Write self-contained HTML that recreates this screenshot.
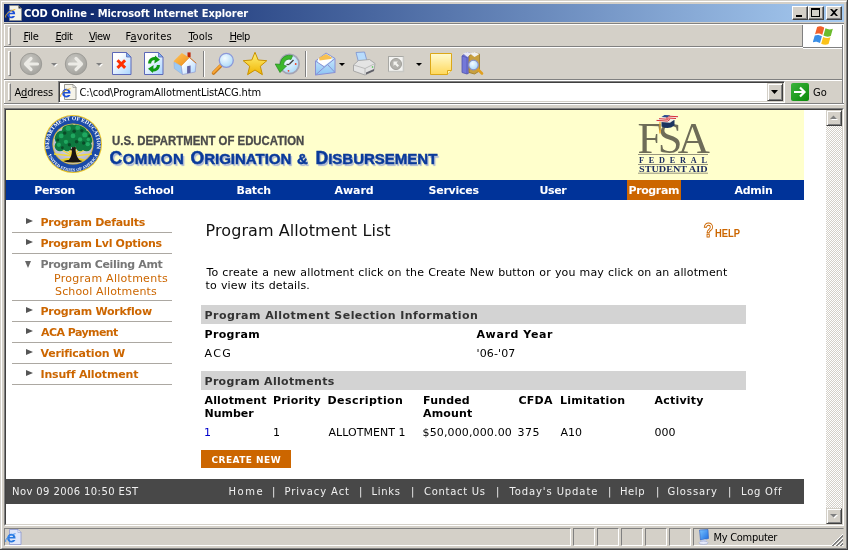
<!DOCTYPE html>
<html><head><meta charset="utf-8"><title>COD Online</title>
<style>
*{box-sizing:border-box;margin:0;padding:0}
html,body{width:848px;height:550px;overflow:hidden;background:#d4d0c8}
body{position:relative;font-family:"DejaVu Sans","Liberation Sans",sans-serif;font-size:11px;color:#000}
.a{position:absolute}
.ui{font-family:"DejaVu Sans Condensed","DejaVu Sans","Liberation Sans",sans-serif;font-size:11px;white-space:nowrap;line-height:14px}
u{text-decoration:underline}
/* frame */
#f1{left:0;top:0;width:848px;height:550px;border-right:1px solid #404040;border-bottom:1px solid #404040}
#f2{left:1px;top:1px;width:846px;height:548px;border:1px solid #fff;border-right-color:#808080;border-bottom-color:#808080}
#title{left:4px;top:4px;width:840px;height:18px;background:linear-gradient(90deg,#0a246a 0%,#0a246a 6%,#a6caf0 100%)}
#title .t{color:#fff;font-weight:bold;font-size:11px;line-height:14px}
.cb{top:2px;width:16px;height:14px;background:#d4d0c8;border:1px solid #fff;border-right-color:#404040;border-bottom-color:#404040;box-shadow:inset -1px -1px 0 #808080}
.hl{height:2px;border-top:1px solid #808080;border-bottom:1px solid #fff;left:4px;width:840px}
.grip{width:3px;border-left:1px solid #fff;border-top:1px solid #fff;border-right:1px solid #808080;border-bottom:1px solid #808080;background:#d4d0c8}
.menu span{position:absolute;top:0}
.sep{width:2px;border-left:1px solid #808080;border-right:1px solid #fff}

.t{position:absolute;white-space:nowrap;line-height:13px;font-size:11px}
.b{font-weight:bold}
.o{color:#cc6600}
.nav{position:absolute;top:184px;width:100px;text-align:center;color:#fff;font-weight:bold;font-size:11px;line-height:13px}
.sl{position:absolute;left:12px;width:160px;height:1px;background:#aca8a2}
.tri{position:absolute;left:26px;width:0;height:0;border:3.500px solid transparent;border-left:7px solid #555;border-right:0}
.bar{position:absolute;left:201px;width:545px;height:19px;background:#d3d3d3}
.f{color:#f0f0f0;font-size:10px}
.sc{font-size:15px}

.sp{position:absolute;top:528px;height:18px;border:1px solid #808080;border-right-color:#fff;border-bottom-color:#fff}
.chk{background-color:#fff;background-image:linear-gradient(45deg,#d4d0c8 25%,transparent 25%,transparent 75%,#d4d0c8 75%),linear-gradient(45deg,#d4d0c8 25%,transparent 25%,transparent 75%,#d4d0c8 75%);background-size:2px 2px;background-position:0 0,1px 1px}
.sbtn{position:absolute;left:826px;width:16px;height:16px;background:#d4d0c8;border:1px solid #d4d0c8;border-right-color:#404040;border-bottom-color:#404040;box-shadow:inset 1px 1px 0 #fff,inset -1px -1px 0 #808080}
</style></head><body><div id="root" style="position:absolute;left:0;top:0;width:848px;height:550px;will-change:transform">
<div class="a" id="f1"></div><div class="a" id="f2"></div>
<!-- title bar -->
<div class="a" id="title">
<svg class="a" style="left:1px;top:1px" width="17" height="16" viewBox="0 0 17 16"><path d="M4.5 .5h9l3 3v12h-12z" fill="#f4f2e8" stroke="#8a8a80" stroke-width=".6"/><path d="M13.5 .5v3h3z" fill="#333"/><path d="M3 9.2h7.2c0-3-2-4.400-4-4.400c-2.400 0-4.200 1.800-4.200 4.300c0 2.500 1.800 4.200 4.200 4.200c1.800 0 3.200-.9 3.800-2.400h-2.400c-.3.500-.8.700-1.400.700c-1.100 0-1.800-.8-1.900-1.700zM4.300 7.800c.2-.9.900-1.400 1.800-1.400c.9 0 1.600.5 1.700 1.400z" fill="#1c4fd8"/><path d="M.8 12.500c-1-2 2-6.500 9.500-8" fill="none" stroke="#e8b020" stroke-width="1"/></svg>
<div class="a ui t" id="ttl" style="left:20px;top:3px;letter-spacing:-.05px">COD Online - Microsoft Internet Explorer</div>
<div class="a cb" style="left:788px"><div class="a" style="left:3px;top:8px;width:6px;height:2px;background:#000"></div></div>
<div class="a cb" style="left:804px"><div class="a" style="left:2px;top:1px;width:9px;height:9px;border:1px solid #000;border-top-width:2px"></div></div>
<div class="a cb" style="left:822px"><svg class="a" style="left:3px;top:2px" width="8" height="7" viewBox="0 0 8 7"><path d="M0 0h2l2 2 2-2h2l-3 3.500 3 3.500h-2l-2-2-2 2h-2l3-3.500z" fill="#000"/></svg></div>
</div>
<!-- rebar -->
<div class="a hl" style="top:23px"></div>
<div class="a" style="left:4px;top:24px;width:1px;height:79px;background:#fff"></div>
<div class="a grip" style="left:8px;top:27px;height:18px"></div>
<div class="a ui" id="m0" style="left:23.4px;top:30px;letter-spacing:-0.36px"><u>F</u>ile</div><div class="a ui" id="m1" style="left:55.4px;top:30px;letter-spacing:-0.54px"><u>E</u>dit</div><div class="a ui" id="m2" style="left:88.9px;top:30px;letter-spacing:-0.6px"><u>V</u>iew</div><div class="a ui" id="m3" style="left:125.56px;top:30px;letter-spacing:0.18px">F<u>a</u>vorites</div><div class="a ui" id="m4" style="left:188.4px;top:30px;letter-spacing:0px"><u>T</u>ools</div><div class="a ui" id="m5" style="left:229.4px;top:30px;letter-spacing:-0.54px"><u>H</u>elp</div>
<div class="a" style="left:802px;top:25px;width:41px;height:23px;background:#fff;border-left:1px solid #808080;border-right:1px solid #808080"></div>
<svg class="a" style="left:812.500px;top:26px" width="22" height="19" viewBox="0 0 21.500 18.600"><path d="M4 1c2.500-1.200 5-.6 7 .8l-2 7c-2-1.400-4.500-1.800-7-.8z" fill="#f2602a"/><path d="M12.200 2.300c2.200 1.300 4.800 1.600 7.200.4l-2 7c-2.400 1.200-5 .9-7.200-.4z" fill="#6cbb2d"/><path d="M1.700 9.300c2.500-1.100 5-.6 7 .8l-1.900 6.600c-2-1.400-4.500-1.900-7-.8z" fill="#3a8ee6"/><path d="M9.900 10.700c2.200 1.300 4.800 1.600 7.200.4l-1.900 6.600c-2.400 1.200-5 .9-7.200-.4z" fill="#fbc21a"/></svg>
<div class="a hl" style="top:46px"></div><div class="a" style="left:803px;top:46px;width:39px;height:3px;background:#fff;border-top:1px solid #fff;border-bottom:1px solid #fff"><div style="height:1px;background:#808080"></div></div>
<div class="a grip" style="left:8px;top:51px;height:25px"></div>
<svg class="a" style="left:0;top:48px" width="500" height="31" viewBox="0 48 500 31">
<defs>
<radialGradient id="gb" cx=".4" cy=".35" r=".7"><stop offset="0" stop-color="#c9c8c3"/><stop offset="1" stop-color="#a3a29d"/></radialGradient>
<linearGradient id="gp" x1="0" y1="0" x2="1" y2="1"><stop offset=".25" stop-color="#fff"/><stop offset="1" stop-color="#a8d4ff"/></linearGradient>
<linearGradient id="gn" x1="0" y1="0" x2="0" y2="1"><stop offset="0" stop-color="#fffbd0"/><stop offset="1" stop-color="#ffd85a"/></linearGradient>
<linearGradient id="gs" x1="0" y1="0" x2="0" y2="1"><stop offset="0" stop-color="#fff27a"/><stop offset="1" stop-color="#f0b400"/></linearGradient>
<linearGradient id="gr" x1="0" y1="0" x2="1" y2="1"><stop offset="0" stop-color="#ffc860"/><stop offset="1" stop-color="#f08a10"/></linearGradient>
<linearGradient id="gm" x1="0" y1="0" x2="0" y2="1"><stop offset="0" stop-color="#d8f0ff"/><stop offset="1" stop-color="#8cc4f4"/></linearGradient>
<radialGradient id="gl" cx=".4" cy=".35" r=".7"><stop offset="0" stop-color="#f4fbff"/><stop offset="1" stop-color="#a8d8f8"/></radialGradient>
</defs>
<!-- back / forward -->
<circle cx="31" cy="64" r="10.700" fill="url(#gb)" stroke="#9c9b96" stroke-width="1"/>
<path d="M37.500 64h-11M31 58.500l-5.500 5.500 5.500 5.500" fill="none" stroke="#ecebe6" stroke-width="3.200" stroke-linecap="round" stroke-linejoin="round"/>
<path d="M52 64h6l-3 3z" fill="#fff"/><path d="M51 63h6l-3 3z" fill="#808080"/>
<circle cx="76" cy="64" r="10.700" fill="url(#gb)" stroke="#9c9b96" stroke-width="1"/>
<path d="M69.500 64h11M76 58.500l5.500 5.500-5.500 5.500" fill="none" stroke="#ecebe6" stroke-width="3.200" stroke-linecap="round" stroke-linejoin="round"/>
<path d="M97 64h6l-3 3z" fill="#fff"/><path d="M96 63h6l-3 3z" fill="#808080"/>
<!-- stop -->
<path d="M112.500 52.500h14l4.500 4.500v17.500h-18.500z" fill="url(#gp)" stroke="#5c68b8" stroke-width="1"/>
<path d="M126.500 52.500v4.500h4.500z" fill="#7ab0f0" stroke="#5c68b8" stroke-width=".8"/>
<path d="M117.500 60.300l7.600 7.600M125.100 60.300l-7.600 7.600" stroke="#ff3000" stroke-width="3" fill="none"/>
<!-- refresh -->
<path d="M144.500 52.500h14l4.500 4.500v17.500h-18.500z" fill="url(#gp)" stroke="#5c68b8" stroke-width="1"/>
<path d="M158.500 52.500v4.500h4.500z" fill="#7ab0f0" stroke="#5c68b8" stroke-width=".8"/>
<path d="M149.600 63.500c0-4 3.600-6 7-4.600" fill="none" stroke="#0f9a12" stroke-width="3"/><path d="M155 55.600l5 4.200-5.600 3.600z" fill="#0f9a12"/>
<path d="M158.400 65c0 4-3.600 6-7 4.600" fill="none" stroke="#0f9a12" stroke-width="3"/><path d="M153 72.900l-5-4.200 5.600-3.600z" fill="#0f9a12"/>
<!-- home -->
<path d="M187.500 52.400h3.100v5h-3.100z" fill="#c02808"/>
<path d="M174 62.200l7.200 3.500 1.300 8.800-8.100-6z" fill="#9ccaf4" stroke="#88a8dc" stroke-width=".5"/>
<path d="M189.200 57.500l6.800 5.700-.8 8.800-12.700 2.500-1.300-8.800z" fill="url(#gp)" stroke="#8890cc" stroke-width=".6"/>
<path d="M187.100 66.200l3.500-.7v7.300l-3.500.7z" fill="#6464a4"/>
<path d="M173.500 61.300l8.300-8.200 7.600 4.600-8 8.400z" fill="url(#gr)"/>
<path d="M189.200 57.200l7 6" stroke="#d87820" stroke-width="1" fill="none"/>
<!-- sep -->
<path d="M203.500 51v26" stroke="#808080"/><path d="M204.500 51v26" stroke="#fff"/>
<!-- search -->
<path d="M220.500 66l-7 7" stroke="#c87818" stroke-width="3.600" stroke-linecap="round"/><path d="M220.300 65.600l-7 7" stroke="#f8a838" stroke-width="2" stroke-linecap="round"/>
<circle cx="226.300" cy="60.300" r="7" fill="url(#gl)" stroke="#8c98d8" stroke-width="1.300"/>
<!-- star -->
<path d="M255 52.300l3.200 7.700 8.600.7-6.500 5.500 2.100 8.500-7.400-4.700-7.400 4.700 2.100-8.500-6.500-5.500 8.600-.7z" fill="url(#gs)" stroke="#c89000" stroke-width="1" stroke-linejoin="round"/>
<!-- history -->
<circle cx="289.500" cy="64" r="9.600" fill="url(#gl)" stroke="#a4a4b4" stroke-width="1.800"/>
<path d="M289.500 64l4-4" stroke="#444" stroke-width="1.500"/><path d="M289.500 64.500h-3" stroke="#444" stroke-width="1.300"/>
<circle cx="295.700" cy="64" r=".9" fill="#f04020"/><circle cx="288.500" cy="70.800" r=".9" fill="#f04020"/>
<path d="M292.500 55.800C287 54 280.500 57 280.300 64.300L275.200 64L280 72.500L286.500 66L283.600 65.200C283.800 60.500 287.500 58.500 291 59.500Z" fill="#3cb82c" stroke="#1f8a1a" stroke-width=".7"/>
<!-- sep -->
<path d="M305.500 51v26" stroke="#808080"/><path d="M306.500 51v26" stroke="#fff"/>
<!-- mail -->
<path d="M315.500 61l10.500-8 9 5.500v14l-19.500 2.500z" fill="url(#gm)" stroke="#8890d4" stroke-width="1"/>
<path d="M318 58.500l12.500-2.500 1.500 4-8 6-6-3z" fill="#fff"/><path d="M319 57.800l7-3.800 6 3.500-1 1.500-11.500 1.500z" fill="#f8c050"/>
<path d="M315.500 61l9 6 10.500-8.500M315.500 75l9-8M335 72.500l-7.500-8" fill="none" stroke="#8890d4" stroke-width="1"/>
<path d="M339 63h6l-3 3z" fill="#000"/>
<!-- print -->
<path d="M356 52.500l8.500-.5 2.500 9-8.500 1z" fill="#b8dcfc" stroke="#7890d0" stroke-width=".8"/>
<path d="M353.500 65l5-4.500 11-1 5.500 4-1 7-9 4.500-11.500-4z" fill="#e4e4e4" stroke="#9a9a9a" stroke-width=".8"/>
<path d="M353.500 65l11.500 3.500 10-5" fill="none" stroke="#b0b0b0" stroke-width=".8"/><path d="M365 68.500v6.500" stroke="#b0b0b0" stroke-width=".8"/>
<path d="M366 72.500l8-3.500v2l-8 3.500z" fill="#606068"/><circle cx="372.500" cy="67" r=".8" fill="#40c040"/>
<!-- edit -->
<rect x="388.500" y="56.500" width="15" height="15" fill="#f4f4f2" stroke="#a8a8a4"/><path d="M388.500 71.500h15v-15" fill="none" stroke="#c8c8c4" stroke-width="1.600"/>
<circle cx="396" cy="64" r="5.500" fill="#b4b3ae" stroke="#a09f9a"/><path d="M393.500 61.500h4.500l-1.500 1.500 2.500 2.500-1.500 1.500-2.500-2.500-1.500 1.500z" fill="#f4f4f0"/>
<path d="M416 63h6l-3 3z" fill="#000"/>
<!-- note -->
<path d="M430.500 53.500h21v17l-4 4h-17z" fill="url(#gn)" stroke="#dca818" stroke-width="1"/><path d="M451.500 70.500h-4v4" fill="#fff4b0" stroke="#dca818" stroke-width="1"/>
<!-- research -->
<path d="M462 56l5-3.500 5 1.500v17l-5 3-5-1.500z" fill="#7478d8" stroke="#5054b0" stroke-width=".8"/><path d="M462 56l5 1.500v16.500" fill="none" stroke="#5054b0" stroke-width=".7"/><path d="M463 53.500l4.500-1.500 5 2-5 3z" fill="#e8e8f4"/>
<path d="M469 56l5-3.500 5.500 1.500v17l-5 3-5.500-1.500z" fill="#c8a040" stroke="#9c7820" stroke-width=".8"/><path d="M470 53.500l4.500-1.500 5 2-5 3z" fill="#f0f0f0"/>
<path d="M476.500 68l5.500 5.500" stroke="#e0a020" stroke-width="2.600" stroke-linecap="round"/>
<circle cx="473.500" cy="65" r="4.800" fill="url(#gl)" stroke="#8890c8" stroke-width="1.200"/>
</svg>

<div class="a hl" style="top:79px"></div>
<div class="a grip" style="left:8px;top:83px;height:18px"></div>
<div class="a ui" id="adr" style="left:14.5px;top:86px;letter-spacing:-0.12px">A<u>d</u>dress</div>
<div class="a" style="left:58px;top:81px;width:727px;height:22px;background:#fff;border:1px solid #808080;border-right-color:#fff;border-bottom-color:#fff;box-shadow:inset 1px 1px 0 #404040,inset -1px -1px 0 #d4d0c8"></div>
<svg class="a" style="left:60px;top:84px" width="17" height="16" viewBox="0 0 17 16"><path d="M4.500 .5h8.500l3 3v12h-11.500z" fill="#f6f4ea" stroke="#808078" stroke-width=".8"/><path d="M13 .5v3h3z" fill="#fff" stroke="#808078" stroke-width=".6"/><path d="M3.200 9.400h7.400c0-3.100-2-4.600-4.100-4.600c-2.500 0-4.300 1.900-4.300 4.400c0 2.600 1.800 4.300 4.300 4.300c1.900 0 3.300-.9 3.900-2.400h-2.500c-.3.500-.8.700-1.400.700c-1.100 0-1.900-.8-2-1.800zM4.400 8c.2-.9.900-1.400 1.900-1.400c.9 0 1.600.5 1.800 1.400z" fill="#1c4fd8"/><path d="M.8 13c-1-2.200 2-6.800 9.700-8.300" fill="none" stroke="#e8b020" stroke-width=".9"/></svg><div class="a ui" id="url" style="left:79.56px;top:86px;letter-spacing:-0.131px">C:\cod\ProgramAllotmentListACG.htm</div>
<div class="a" style="left:767px;top:83px;width:16px;height:18px;background:#d4d0c8;border:1px solid #d4d0c8;border-right-color:#404040;border-bottom-color:#404040;box-shadow:inset 1px 1px 0 #fff,inset -1px -1px 0 #808080"><svg class="a" style="left:3px;top:6px" width="7" height="4" viewBox="0 0 7 4"><path d="M0 0h7l-3.500 4z" fill="#000"/></svg></div>
<div class="a" style="left:791px;top:83px;width:18px;height:18px;border-radius:2px;background:linear-gradient(135deg,#3cb43c,#0a8a0a)"></div>
<svg class="a" style="left:791px;top:83px" width="18" height="18" viewBox="0 0 18 18"><path d="M3 9h10M9 4.500l4.500 4.500-4.500 4.500" fill="none" stroke="#fff" stroke-width="2.200"/></svg>
<div class="a ui" id="go" style="left:813px;top:86px">Go</div>
<div class="a" style="left:4px;top:103px;width:840px;height:1px;background:#808080"></div>
<div class="a" style="left:4px;top:104px;width:840px;height:1px;background:#fff"></div>
<div class="a" style="left:842px;top:25px;width:1px;height:78px;background:#808080"></div><div class="a" style="left:843px;top:25px;width:1px;height:78px;background:#fff"></div>
<!-- content frame -->
<div class="a" id="cf" style="left:4px;top:108px;width:840px;height:418px;border:1px solid #808080;border-right-color:#fff;border-bottom-color:#fff"></div>
<div class="a" id="ct" style="left:5px;top:109px;width:838px;height:416px;border:1px solid #404040;border-right-color:#d4d0c8;border-bottom-color:#d4d0c8;background:#fff;overflow:hidden">
</div>

<!-- page content -->
<div class="a" style="left:6px;top:110px;width:798px;height:70px;background:#ffffcc"></div>
<!--seal--><svg class="a" style="left:42px;top:113px" width="62" height="62" viewBox="-31 -31 62 62">
<defs>
<path id="arcT" d="M-23 6.500A23.900 23.900 0 1 1 23 6.500"/>
<path id="arcB" d="M-25.600 9.800A27.400 27.400 0 0 0 25.600 9.800"/>
<radialGradient id="sg" cx=".5" cy=".45" r=".55"><stop offset="0" stop-color="#e4e4f0"/><stop offset="1" stop-color="#b8b8d0"/></radialGradient>
</defs>
<circle r="29" fill="#e6c028"/>
<circle r="28" fill="#1a4aa8"/>
<circle r="20.600" fill="#e6c028"/>
<circle r="19.800" fill="url(#sg)"/>
<g stroke="#f0d838" stroke-width="1.300">
<path d="M0 12L-19 2M0 12L-17.500 -8M0 12L-11 -16M0 12L0 -19.500M0 12L11 -16M0 12L17.500 -8M0 12L19 2M0 12L-19 10M0 12L19 10"/></g>
<text font-family="'Liberation Serif',serif" font-weight="bold" font-size="5.700" fill="#fff" letter-spacing="0"><textPath href="#arcT" startOffset="50%" text-anchor="middle">DEPARTMENT OF EDUCATION</textPath></text>
<text font-family="'Liberation Serif',serif" font-weight="bold" font-size="4.300" fill="#fff" letter-spacing="0"><textPath href="#arcB" startOffset="50%" text-anchor="middle">UNITED STATES OF AMERICA</textPath></text>
<circle cx="-22.300" cy="10.800" r=".8" fill="#fff"/><circle cx="22.300" cy="10.800" r=".8" fill="#fff"/>
<clipPath id="sc"><circle r="19.800"/></clipPath><g clip-path="url(#sc)"><g transform="translate(0,-1) scale(1.180)"><!-- ground -->
<path d="M-12 14.500q12-4 24 0q-12 4.500-24 0z" fill="#e8d020"/>
<path d="M-9 15.500q9-2.500 18 0q-9 2-18 0z" fill="#181410"/>
<!-- trunk -->
<path d="M-4.500 15.500c3-3 4-7 3.500-12l3-.5c0 5 1 9.500 4.500 12.500c-3.500.8-7.500.8-11 0z" fill="#181410"/>
<path d="M-1 6l-7-6M1.500 5l7-6M.5 4v-8" stroke="#3a2a18" stroke-width="1.400" fill="none"/>
<!-- canopy -->
<g fill="#0e7a40">
<circle cx="-9" cy="-4" r="6.500"/><circle cx="-3" cy="-10" r="6.500"/><circle cx="5" cy="-10" r="6.500"/><circle cx="10.500" cy="-4" r="6.500"/><circle cx="-11" cy="2.500" r="4.500"/><circle cx="11.500" cy="2.500" r="4.500"/><circle cx="0" cy="-3" r="6.500"/><circle cx="-5" cy="3.500" r="3.500"/><circle cx="6" cy="3.500" r="3.500"/>
</g>
<g fill="#20a860">
<circle cx="-10" cy="-6" r="2"/><circle cx="-4" cy="-12.500" r="2.200"/><circle cx="4" cy="-13" r="2"/><circle cx="10" cy="-7" r="2.200"/><circle cx="0" cy="-6" r="2"/><circle cx="-12" cy="1.500" r="1.800"/><circle cx="12.500" cy="1" r="1.800"/><circle cx="6" cy="-3" r="1.800"/><circle cx="-6" cy="-1" r="1.800"/><circle cx="13" cy="-3" r="1.500"/>
</g>
<g fill="#0a4a28">
<circle cx="-7" cy="-8.500" r="1.500"/><circle cx="1" cy="-10" r="1.500"/><circle cx="7.500" cy="-10.500" r="1.400"/><circle cx="-13" cy="-2.500" r="1.300"/><circle cx="3" cy="-1" r="1.500"/><circle cx="-3" cy="1.500" r="1.400"/><circle cx="9" cy="0" r="1.400"/><circle cx="-9" cy="4" r="1.200"/><circle cx="14" cy="-6" r="1.200"/>
</g></g></g>
</svg>
<!--/seal-->
<div class="t b" id="dept" style="left:112px;top:135px;font-family:'Liberation Sans',sans-serif;font-size:12px;color:#4a4a4a;-webkit-text-stroke:.3px #4a4a4a;transform-origin:0 0;transform:scaleX(.948)">U.S. DEPARTMENT OF EDUCATION</div>
<div class="t b" id="w1" style="left:109.5px;top:148px;font-family:'Liberation Sans',sans-serif;font-size:17.500px;line-height:20px;color:#0a3a9a;-webkit-text-stroke:.45px #0a3a9a;text-shadow:1.500px 1.500px 1px #aab6d6;letter-spacing:0.504px"><span>C</span><span class="sc">OMMON</span></div><div class="t b" id="w2" style="left:190.5px;top:148px;font-family:'Liberation Sans',sans-serif;font-size:17.500px;line-height:20px;color:#0a3a9a;-webkit-text-stroke:.45px #0a3a9a;text-shadow:1.500px 1.500px 1px #aab6d6;letter-spacing:0px"><span>O</span><span class="sc">RIGINATION</span></div><div class="t b" id="w3" style="left:297px;top:148px;font-family:'Liberation Sans',sans-serif;font-size:17.500px;line-height:20px;color:#0a3a9a;-webkit-text-stroke:.45px #0a3a9a;text-shadow:1.500px 1.500px 1px #aab6d6;letter-spacing:0px"><span class="sc">&amp;</span></div><div class="t b" id="w4" style="left:315.5px;top:148px;font-family:'Liberation Sans',sans-serif;font-size:17.500px;line-height:20px;color:#0a3a9a;-webkit-text-stroke:.45px #0a3a9a;text-shadow:1.500px 1.500px 1px #aab6d6;letter-spacing:0px"><span>D</span><span class="sc">ISBURSEMENT</span></div>
<!--fsa--><svg class="a" style="left:630px;top:110px" width="90" height="70" viewBox="630 110 90 70">
<text id="fsaT" x="637.500" y="153.300" font-family="'Liberation Serif',serif" font-size="44.500" fill="#6e6c58" letter-spacing="-4.600">FSA</text>
<path d="M638 154.500h70M638 164.500h70M638 173.200h70" stroke="#7c7a68" stroke-width=".8"/>
<text x="639" y="162.900" font-family="'Liberation Serif',serif" font-weight="bold" font-size="8.200" fill="#1c2c60" textLength="68" lengthAdjust="spacing">FEDERAL</text>
<text x="639" y="171.800" font-family="'Liberation Serif',serif" font-weight="bold" font-size="8.300" fill="#1c2c60" textLength="68.500" lengthAdjust="spacingAndGlyphs">STUDENT AID</text>
<!-- cap -->
<path d="M661.500 121.500l13-1.500v5.500q-6 4.500-13 1z" fill="#1c3460"/>
<path d="M654.800 121.600l9.500-6.600 15.300.9-9.600 6.800z" fill="#f4f0e8"/>
<path d="M661.500 116.900l3-2 5.800.4-3 2.200z" fill="#2c4c8c"/>
<path d="M656.500 120.400l11 .7 2.600-1.800M659 118.700l9.500.6M668.500 116.200l9.500.5M666 117.900l10 .6" stroke="#d83038" stroke-width="1" fill="none"/>
<path d="M660 121.800v10" stroke="#e8a830" stroke-width="1.200"/><path d="M659.300 130h1.400v3.500h-1.400z" fill="#e8a830"/>
</svg>
<!--/fsa-->
<div class="a" style="left:6px;top:180px;width:798px;height:20px;background:#003399"></div>
<div class="a" style="left:627px;top:180px;width:54px;height:20px;background:#cc6600"></div>
<div class="t b" id="n0" style="left:34.25px;top:184px;color:#fff;letter-spacing:-0.36px">Person</div><div class="t b" id="n1" style="left:133.98px;top:184px;color:#fff;letter-spacing:-0.216px">School</div><div class="t b" id="n2" style="left:236.5px;top:184px;color:#fff;letter-spacing:-0.225px">Batch</div><div class="t b" id="n3" style="left:334.48px;top:184px;color:#fff;letter-spacing:-0.045px">Award</div><div class="t b" id="n4" style="left:428.56px;top:184px;color:#fff;letter-spacing:-0.257px">Services</div><div class="t b" id="n5" style="left:539.54px;top:184px;color:#fff;letter-spacing:-0.42px">User</div><div class="t b" id="n6" style="left:628.5px;top:184px;color:#fff;letter-spacing:-0.39px">Program</div><div class="t b" id="n7" style="left:734.48px;top:184px;color:#fff;letter-spacing:-0.27px">Admin</div>
<!-- sidebar -->
<div class="tri" style="top:218px"></div><div class="t b o" id="s0" style="left:40.5px;top:216px;letter-spacing:-0.3px">Program Defaults</div><div class="sl" style="top:232px"></div>
<div class="tri" style="top:239px"></div><div class="t b o" id="s1" style="left:40.5px;top:237px;letter-spacing:-0.31px">Program Lvl Options</div><div class="sl" style="top:253px"></div>
<div class="a" style="left:25px;top:261px;width:0;height:0;border:3.500px solid transparent;border-top:7px solid #666;border-bottom:0"></div><div class="t b" id="s2" style="left:40.5px;top:258px;color:#777;letter-spacing:-0.35px">Program Ceiling Amt</div>
<div class="t o" id="s3" style="left:54.1px;top:272px;letter-spacing:0.265px">Program Allotments</div><div class="t o" id="s4" style="left:55px;top:285px;letter-spacing:0.157px">School Allotments</div><div class="sl" style="top:300px"></div>
<div class="tri" style="top:307px"></div><div class="t b o" id="s5" style="left:40.5px;top:305px;letter-spacing:-0.252px">Program Workflow</div><div class="sl" style="top:321px"></div>
<div class="tri" style="top:328px"></div><div class="t b o" id="s6" style="left:41px;top:326px;letter-spacing:-0.558px">ACA Payment</div><div class="sl" style="top:342px"></div>
<div class="tri" style="top:349px"></div><div class="t b o" id="s7" style="left:40.5px;top:347px;letter-spacing:-0.222px">Verification W</div><div class="sl" style="top:363px"></div>
<div class="tri" style="top:370px"></div><div class="t b o" id="s8" style="left:40.5px;top:368px;letter-spacing:-0.18px">Insuff Allotment</div><div class="sl" style="top:384px"></div>
<!-- main -->
<div class="t" id="h1" style="left:205.58px;top:221px;font-size:16px;line-height:20px;color:#111;letter-spacing:0.077px">Program Allotment List</div>
<!--help--><svg class="a" style="left:700px;top:218px" width="45" height="24" viewBox="700 218 45 24"><text x="703.600" y="236.600" font-family="'Liberation Sans',sans-serif" font-weight="bold" font-size="20" fill="#fff" stroke="#cc6600" stroke-width="1" textLength="10" lengthAdjust="spacingAndGlyphs">?</text><text x="715" y="236.800" font-family="'Liberation Sans',sans-serif" font-weight="bold" font-size="11.700" fill="#cc6600" textLength="25" lengthAdjust="spacingAndGlyphs">HELP</text></svg><!--/help-->
<div class="t" id="p1" style="left:206.42px;top:266px;word-spacing:.5px;letter-spacing:0.125px">To create a new allotment click on the Create New button or you may click on an allotment</div>
<div class="t" id="p2" style="left:205.5px;top:279px;word-spacing:.5px;letter-spacing:0.142px">to view its details.</div>
<div class="bar" style="top:305px"></div><div class="t b" id="b1" style="left:204.5px;top:309px;color:#333;letter-spacing:0.45px">Program Allotment Selection Information</div>
<div class="t b" id="l1" style="left:204.5px;top:328px;letter-spacing:0.33px">Program</div><div class="t b" id="l2" style="left:476.5px;top:328px;letter-spacing:0.6px">Award Year</div>
<div class="t" id="v1" style="left:204.5px;top:347px;letter-spacing:1.35px">ACG</div><div class="t" id="v2" style="left:476.54px;top:347px;letter-spacing:0.12px">'06-'07</div>
<div class="bar" style="top:371px"></div><div class="t b" id="b2" style="left:204.5px;top:375px;color:#333;letter-spacing:0.318px">Program Allotments</div>
<div class="t b" id="c1" style="left:204.5px;top:394px;letter-spacing:0.135px">Allotment</div><div class="t b" id="c1b" style="left:204.5px;top:407px;letter-spacing:0px">Number</div><div class="t b" id="c2" style="left:273.02px;top:394px;letter-spacing:0.18px">Priority</div><div class="t b" id="c3" style="left:327.58px;top:394px;letter-spacing:0.414px">Description</div><div class="t b" id="c4" style="left:423px;top:394px;letter-spacing:0.18px">Funded</div><div class="t b" id="c4b" style="left:423px;top:407px;letter-spacing:0.18px">Amount</div><div class="t b" id="c5" style="left:518.48px;top:394px;letter-spacing:0.24px">CFDA</div><div class="t b" id="c6" style="left:560.02px;top:394px;letter-spacing:0.22px">Limitation</div><div class="t b" id="c7" style="left:654.48px;top:394px;letter-spacing:0.231px">Activity</div>
<div class="t" id="d1" style="left:204px;top:426px;color:#0000cc">1</div><div class="t" id="d2" style="left:273px;top:426px">1</div><div class="t" id="d3" style="left:328.5px;top:426px;letter-spacing:0.036px">ALLOTMENT 1</div><div class="t" id="d4" style="left:422.5px;top:426px;letter-spacing:0.138px">$50,000,000.00</div><div class="t" id="d5" style="left:517.6px;top:426px;letter-spacing:0.45px">375</div><div class="t" id="d6" style="left:560.5px;top:426px;letter-spacing:0px">A10</div><div class="t" id="d7" style="left:654.5px;top:426px;letter-spacing:0px">000</div>
<div class="a" style="left:201px;top:450px;width:90px;height:18px;background:#cc6600"></div><div class="t b" id="btn" style="left:211.46px;top:454px;font-size:9px;line-height:12px;color:#fff;letter-spacing:0.46px">CREATE NEW</div>
<!-- footer -->
<div class="a" style="left:6px;top:479px;width:798px;height:25px;background:#484848"></div>
<div class="t f" id="ft1" style="left:12px;top:485px;letter-spacing:0.405px">Nov 09 2006 10:50 EST</div>
<div class="t f" id="fl0" style="left:228.5px;top:485px;letter-spacing:1.5px">Home</div><div class="t f" id="fl1" style="left:272px;top:485px">|</div><div class="t f" id="fl2" style="left:284.5px;top:485px;letter-spacing:0.9px">Privacy Act</div><div class="t f" id="fl3" style="left:359px;top:485px">|</div><div class="t f" id="fl4" style="left:371.5px;top:485px;letter-spacing:0.675px">Links</div><div class="t f" id="fl5" style="left:411px;top:485px">|</div><div class="t f" id="fl6" style="left:424px;top:485px;letter-spacing:0.7px">Contact Us</div><div class="t f" id="fl7" style="left:496px;top:485px">|</div><div class="t f" id="fl8" style="left:509.4px;top:485px;letter-spacing:0.9px">Today's Update</div><div class="t f" id="fl9" style="left:608px;top:485px">|</div><div class="t f" id="fl10" style="left:620px;top:485px;letter-spacing:0.6px">Help</div><div class="t f" id="fl11" style="left:656px;top:485px">|</div><div class="t f" id="fl12" style="left:667.5px;top:485px;letter-spacing:0.9px">Glossary</div><div class="t f" id="fl13" style="left:728px;top:485px">|</div><div class="t f" id="fl14" style="left:741px;top:485px;letter-spacing:0.75px">Log Off</div>
<!-- scrollbar -->
<!--scr--><div class="a chk" style="left:826px;top:110px;width:16px;height:414px"></div>
<div class="sbtn" style="top:110px"><svg class="a" style="left:2px;top:4px" width="10" height="6" viewBox="0 0 10 6"><path d="M2 5h7l-3.500-3.500z" fill="#fff"/><path d="M1 4h7l-3.500-3.500z" fill="#808080"/></svg></div>
<div class="sbtn" style="top:508px"><svg class="a" style="left:2px;top:5px" width="10" height="6" viewBox="0 0 10 6"><path d="M2 1h7l-3.500 3.500z" fill="#fff"/><path d="M1 0h7l-3.500 3.500z" fill="#808080"/></svg></div><!--/scr-->
<!-- status bar -->
<!--sb--><div class="sp" style="left:4px;width:567px"></div><div class="sp" style="left:573px;width:22px"></div><div class="sp" style="left:597px;width:22px"></div><div class="sp" style="left:621px;width:22px"></div><div class="sp" style="left:645px;width:22px"></div><div class="sp" style="left:669px;width:22px"></div><div class="sp" style="left:693px;width:151px;border-right-color:#d4d0c8"></div>
<svg class="a" style="left:5px;top:529px" width="17" height="16" viewBox="0 0 17 16"><path d="M4.500 .5h8.500l3 3v12h-11.500z" fill="#dfe6fa" stroke="#8c98d0" stroke-width=".8"/><path d="M13 .5v3h3z" fill="#fff" stroke="#8c98d0" stroke-width=".6"/><path d="M3.200 9.400h7.400c0-3.100-2-4.600-4.100-4.600c-2.500 0-4.300 1.900-4.300 4.400c0 2.600 1.800 4.300 4.300 4.300c1.900 0 3.300-.9 3.900-2.400h-2.500c-.3.500-.8.700-1.400.700c-1.100 0-1.900-.8-2-1.800zM4.400 8c.2-.9.900-1.400 1.900-1.400c.9 0 1.600.5 1.800 1.400z" fill="#2a7ae0"/><path d="M.8 13c-1-2.200 2-6.800 9.700-8.300" fill="none" stroke="#3c8cf0" stroke-width=".9"/></svg>
<svg class="a" style="left:697px;top:529px" width="13" height="16" viewBox="0 0 13 16"><defs><linearGradient id="mc" x1="0" y1="0" x2="1" y2="1"><stop offset="0" stop-color="#7cc4ff"/><stop offset="1" stop-color="#1c6ce0"/></linearGradient></defs><path d="M2.500 1l8.500-.5.500 9-8 1.500z" fill="url(#mc)" stroke="#2c5cc0" stroke-width=".6"/><path d="M4.500 11l4-.8 1 2.300-5.500 1z" fill="#c8d4f0"/><ellipse cx="6.500" cy="13.800" rx="4.500" ry="1.700" fill="#e4e8f8" stroke="#98a4d0" stroke-width=".6"/></svg>
<div class="a ui" id="myc" style="left:713.54px;top:531px;letter-spacing:-0.288px">My Computer</div>
<svg class="a" style="left:830px;top:533px" width="13" height="13" viewBox="0 0 13 13"><path d="M1 13L13 1M5 13L13 5M9 13L13 9" stroke="#fff" stroke-width="1"/><path d="M2 13L13 2M3 13L13 3M6 13L13 6M7 13L13 7M10 13L13 10M11 13L13 11" stroke="#808080" stroke-width="1"/></svg><!--/sb-->
</div></body></html>
